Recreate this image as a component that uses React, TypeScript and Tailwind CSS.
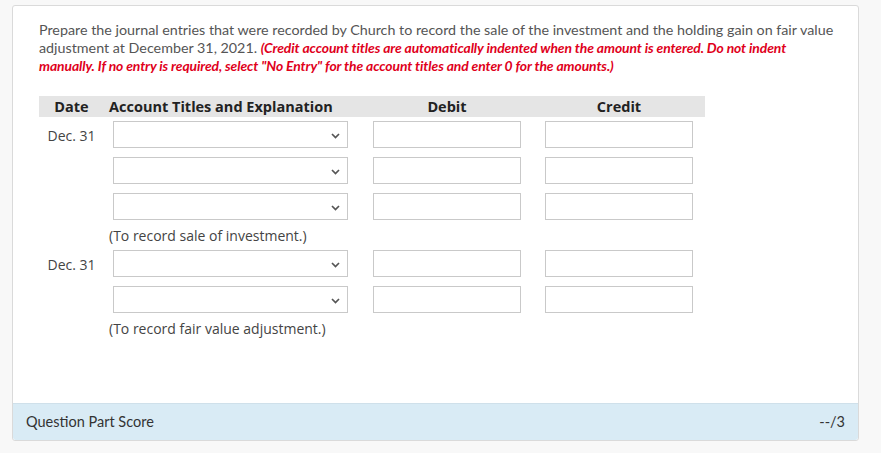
import React from "react";

const Chevron = () => (
  <svg width="9" height="6" viewBox="0 0 9 6" className="absolute right-[7px] top-[11px]">
    <path d="M1 1l3.5 3.5L8 1" fill="none" stroke="#555" strokeWidth="1.7" />
  </svg>
);

const SelectBox = () => (
  <div className="relative ml-[9px] h-[27px] w-[235px] border border-[#c9c9c9] bg-white">
    <Chevron />
  </div>
);

const AmountBox = () => <div className="mx-auto h-[27px] w-[148px] border border-[#c9c9c9] bg-white" />;

const EntryRow = ({ date, top }: { date?: string; top: string }) => (
  <div className={`grid grid-cols-[65px_257px_172px_172px] ${top}`}>
    <div className="pt-[4px] text-center text-[14px] text-[#444]">{date}</div>
    <div>
      <SelectBox />
    </div>
    <div>
      <AmountBox />
    </div>
    <div>
      <AmountBox />
    </div>
  </div>
);

const Caption = ({ children }: { children: React.ReactNode }) => (
  <div className="grid h-[30px] grid-cols-[65px_601px] pt-[7px]">
    <div />
    <div className="pl-[5px] text-[14px] leading-[18px] text-[#444]">{children}</div>
  </div>
);

export default function App() {
  return (
    <div className="h-[453px] w-[881px] bg-[#f8f8f8] pt-[5px] pl-[12px]" style={{ fontFamily: "'Open Sans', sans-serif" }}>
      <div className="w-[847px] rounded-[3px] border border-[#dadada] bg-white">
        <div className="h-[397px] px-[26px] pt-[15px]">
          <p className="whitespace-nowrap text-[14.3px] leading-[18px] text-[#555]" style={{ fontFamily: "Lato, sans-serif" }}>
            Prepare the journal entries that were recorded by Church to record the sale of the investment and the holding gain on fair value
            <br />
            adjustment at December 31, 2021.{" "}
            <span className="text-[13.9px] font-bold italic tracking-[-0.1px] text-[#e0001b]">
              (Credit account titles are automatically indented when the amount is entered. Do not indent
              <br />
              manually. If no entry is required, select "No Entry" for the account titles and enter 0 for the amounts.)
            </span>
          </p>

          <div className="mt-[21px] w-[666px]">
            <div className="grid h-[21px] grid-cols-[65px_257px_172px_172px] items-center bg-[#e5e5e5] text-[14.5px] font-bold text-[#222]">
              <div className="text-center">Date</div>
              <div className="pl-[5px]">Account Titles and Explanation</div>
              <div className="text-center">Debit</div>
              <div className="text-center">Credit</div>
            </div>
            <EntryRow date="Dec. 31" top="mt-[4px]" />
            <EntryRow top="mt-[9px]" />
            <EntryRow top="mt-[9px]" />
            <Caption>(To record sale of investment.)</Caption>
            <EntryRow date="Dec. 31" top="mt-0" />
            <EntryRow top="mt-[9px]" />
            <Caption>(To record fair value adjustment.)</Caption>
          </div>
        </div>
        <div
          className="flex h-[37px] items-center justify-between rounded-b-[3px] border-t border-[#cfe0ea] bg-[#d9ebf5] px-[13px] text-[14.5px] text-[#333]"
          style={{ fontFamily: "Lato, sans-serif" }}
        >
          <span>Question Part Score</span>
          <span>--/3</span>
        </div>
      </div>
    </div>
  );
}
